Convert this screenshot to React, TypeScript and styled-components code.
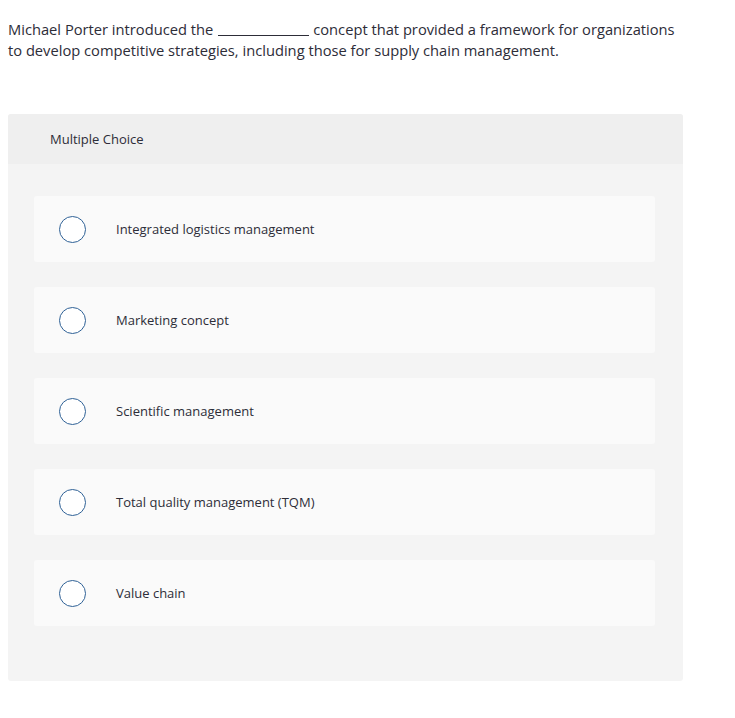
import { FC } from "react";
import styled, { createGlobalStyle } from "styled-components";

const GlobalStyle = createGlobalStyle`
  body {
    margin: 0;
    background: #ffffff;
    font-family: "Open Sans", "Liberation Sans", sans-serif;
    color: #2b2b35;
  }
`;

const Page = styled("div")`
  padding: 19px 8px 0 8px;
  width: 675px;
`;

const Prompt = styled("p")`
  margin: 0;
  font-size: 14.7px;
  line-height: 21px;
  color: #2d2d38;
`;

const Blank = styled("span")`
  display: inline-block;
  width: 91px;
  height: 14px;
  border-bottom: 1px solid #2d2d38;
  margin: 0 4px 0 5px;
  vertical-align: -1px;
`;

const Panel = styled("section")`
  margin-top: 53px;
  background: #f4f4f4;
  border-radius: 3px;
  overflow: hidden;
  padding-bottom: 55px;
`;

const PanelHeader = styled("div")`
  height: 50px;
  display: flex;
  align-items: center;
  padding-left: 42px;
  background: #efefef;
  font-size: 13px;
  color: #2d2d38;
`;

const OptionList = styled("div")`
  display: flex;
  flex-direction: column;
  gap: 25px;
  padding: 32px 28px 0 26px;
`;

const Option = styled("label")`
  display: flex;
  align-items: center;
  height: 66px;
  background: #fafafa;
  border-radius: 3px;
  padding-left: 25px;
  cursor: pointer;
`;

const Radio = styled("span")`
  width: 25px;
  height: 25px;
  border: 1.5px solid #2f6196;
  border-radius: 50%;
  background: #ffffff;
  flex-shrink: 0;
`;

const OptionText = styled("span")`
  margin-left: 30px;
  font-size: 13px;
  color: #2d2d38;
`;

const choices = [
  "Integrated logistics management",
  "Marketing concept",
  "Scientific management",
  "Total quality management (TQM)",
  "Value chain",
];

const App: FC = () => {
  return (
    <>
      <GlobalStyle />
      <Page>
        <Prompt>
          Michael Porter introduced the
          <Blank />
          concept that provided a framework for organizations to develop
          competitive strategies, including those for supply chain management.
        </Prompt>
        <Panel>
          <PanelHeader>Multiple Choice</PanelHeader>
          <OptionList>
            {choices.map((c) => (
              <Option key={c}>
                <Radio />
                <OptionText>{c}</OptionText>
              </Option>
            ))}
          </OptionList>
        </Panel>
      </Page>
    </>
  );
};

export default App;
